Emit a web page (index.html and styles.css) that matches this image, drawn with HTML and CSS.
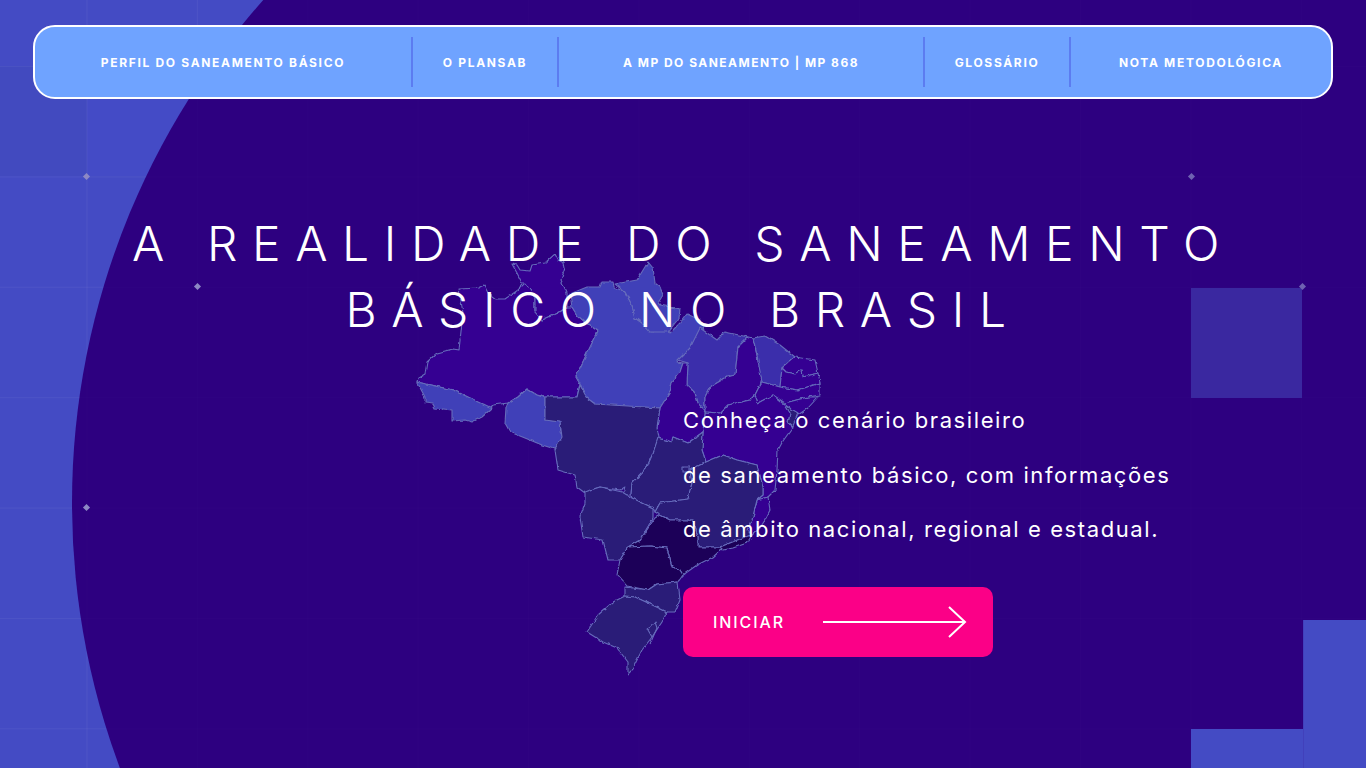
FILE: index.html
```html
<!DOCTYPE html>
<html lang="pt-BR">
<head>
<meta charset="utf-8">
<title>A realidade do saneamento básico no Brasil</title>
<link rel="stylesheet" href="styles.css">
</head>
<body>
<div class="backdrop" aria-hidden="true">
  <div class="cell cell-a"></div>
  <div class="cell cell-b"></div>
  <div class="gridlines"></div>
  <div class="disc"></div>
  <div class="gridlines gridlines-faint"></div>
  <div class="square square-main"></div>
  <div class="square square-tall"></div>
  <div class="square square-low"></div>
  <span class="dot d1"></span><span class="dot d2"></span><span class="dot d3"></span><span class="dot d4"></span><span class="dot d5"></span>
  <svg class="map" viewBox="0 0 1366 768" width="1366" height="768">
    <defs>
      <filter id="rough" x="0" y="0" width="100%" height="100%" filterUnits="userSpaceOnUse" primitiveUnits="userSpaceOnUse">
        <feTurbulence type="fractalNoise" baseFrequency="0.16" numOctaves="2" seed="4" result="n"/>
        <feDisplacementMap in="SourceGraphic" in2="n" scale="3.5" xChannelSelector="R" yChannelSelector="G"/>
      </filter>
    </defs>
    <g class="states" filter="url(#rough)">
      <path class="s-mid" d="M459 289 478 288 484 285 488 293 496 299 505 299 518 290 525 283 535 297 535 312 542 320 553 315 558 313 567 307 572 307 577 315 585 322 598 331 576 376 580 383 577 397 545 397 537 395 527 389 518 397 508 403 493 405 490 408 453 390 417 382 418 378 425 374 427 362 437 353 453 349 459 350 463 313Z"/>
      <path class="s-mid" d="M512 264 517 265 520 270 530 271 532 265 545 263 555 254 558 260 564 263 565 268 561 280 567 293 567 307 558 313 553 315 542 320 535 312 535 297 525 283 522 283 517 273Z"/>
      <path class="s-light" d="M417 382 453 390 492 408 482 417 472 422 465 420 452 421 452 410 435 408 433 404 425 403 425 397Z"/>
      <path class="s-light" d="M508 403 518 397 527 389 537 395 545 398 545 420 562 422 560 432 563 437 558 447 555 449 542 445 525 438 510 432 505 423 506 408Z"/>
      <path class="s-light" d="M576 376 598 331 585 322 577 315 572 307 570 294 587 287 600 287 602 282 613 282 614 287 625 292 632 305 635 318 642 323 653 332 667 327 670 333 680 323 687 314 700 320 703 327 697 342 687 353 677 362 683 363 680 372 672 382 670 392 660 408 597 405 585 397 580 383Z"/>
      <path class="s-light" d="M615 284 637 280 648 262 653 268 655 283 660 287 663 295 658 303 660 305 680 309 679 318 668 332 650 332 642 323 635 318 632 305 625 292Z"/>
      <path class="s-soft" d="M700 328 717 340 725 332 748 337 738 347 735 375 727 377 710 387 705 397 705 412 698 403 695 393 687 385 688 363 678 360 690 348Z"/>
      <path class="s-mid" d="M748 337 753 338 757 355 762 378 760 385 755 395 750 400 728 405 720 413 705 412 705 397 710 387 727 377 735 375 738 347Z"/>
      <path class="s-soft" d="M753 338 765 336 780 345 795 357 782 368 780 387 762 382 757 355Z"/>
      <path class="s-mid" d="M795 357 815 360 818 373 803 377 802 370 795 374 786 372 782 368Z"/>
      <path class="s-mid" d="M782 368 786 372 795 374 802 370 803 377 818 373 820 383 798 390 780 387Z"/>
      <path class="s-mid" d="M762 382 780 387 798 390 820 383 820 395 808 397 785 403 773 395 758 403 755 395 760 385Z"/>
      <path class="s-mid" d="M785 403 808 397 818 397 808 408 798 415 785 405Z"/>
      <path class="s-dark" d="M785 405 798 413 793 426 788 422 790 413Z"/>
      <path class="s-mid" d="M705 412 720 413 728 405 750 400 755 395 758 403 773 395 785 405 790 413 788 422 793 427 783 441 778 450 777 470 775 490 768 497 757 500 763 495 763 487 757 465 737 460 723 455 706 462 702 450 703 432Z"/>
      <path class="s-mid" d="M757 500 768 497 770 510 765 520 760 528 752 535 747 530 752 520Z"/>
      <path class="s-mid" d="M660 408 670 392 672 382 680 372 683 363 688 363 687 385 695 393 698 403 705 412 703 432 688 443 673 437 672 442 658 438 657 427Z"/>
      <path class="s-dark" d="M545 397 577 397 580 385 587 398 595 404 660 408 657 427 659 438 653 453 647 467 632 483 631 495 623 495 625 487 620 490 600 487 590 490 585 493 577 487 575 475 558 470 555 450 562 437 560 422 545 420Z"/>
      <path class="s-dark" d="M658 438 672 442 673 437 688 443 703 432 702 450 706 462 690 470 692 483 688 499 660 503 655 512 653 508 632 498 631 495 632 483 647 467 653 453Z"/>
      <path class="s-dark" d="M655 512 660 503 688 499 692 483 690 470 706 462 723 455 737 460 757 465 763 487 763 495 757 500 752 520 747 530 752 535 745 537 720 547 698 547 698 537 693 520 670 520 660 515Z"/>
      <path class="s-dark" d="M585 492 600 487 622 492 632 498 653 508 653 518 640 540 628 547 620 560 608 560 603 540 583 537 580 517 585 503Z"/>
      <path class="s-deep" d="M655 518 660 515 670 520 693 520 698 537 698 547 720 547 723 548 713 557 697 565 683 575 680 570 672 567 667 548 650 546 628 547 640 540Z"/>
      <path class="s-deep" d="M720 547 745 537 752 535 747 543 733 548 723 550Z"/>
      <path class="s-deep" d="M628 547 650 546 667 548 672 567 680 570 683 575 678 582 657 584 648 590 627 586 617 575 620 560Z"/>
      <path class="s-dark" d="M625 587 648 590 657 584 678 582 680 600 675 612 667 612 648 603 635 597 625 596Z"/>
      <path class="s-dark" d="M625 596 635 597 648 603 667 612 662 622 652 637 642 650 632 670 628 674 628 662 617 648 603 642 587 632 598 615 613 602Z"/>
      <path class="s-dark" d="M682 467h7v5h-7Z"/>
      <path class="s-mid s-line" d="M652 637 648 630 655 622 657 628 650 644"/>
    </g>
  </svg>
</div>

<nav class="topnav">
  <a class="navitem w-a" href="#">PERFIL DO SANEAMENTO BÁSICO</a>
  <a class="navitem w-b" href="#">O PLANSAB</a>
  <a class="navitem w-c" href="#">A MP DO SANEAMENTO | MP 868</a>
  <a class="navitem w-b" href="#">GLOSSÁRIO</a>
  <a class="navitem w-d" href="#">NOTA METODOLÓGICA</a>
</nav>

<main class="hero">
  <h1 class="title">A REALIDADE DO SANEAMENTO<br>BÁSICO NO BRASIL</h1>
  <section class="intro">
    <p class="lead">Conheça o cenário brasileiro<br>de saneamento básico, com informações<br>de âmbito nacional, regional e estadual.</p>
    <a class="start" href="#">
      <span class="start-label">INICIAR</span>
      <svg class="start-arrow" width="144" height="32" viewBox="0 0 144 32"><path d="M0 16H142M126 1l16 15-16 15"/></svg>
    </a>
  </section>
</main>
</body>
</html>
```
FILE: styles.css
```css
* { box-sizing: border-box; }
html, body { margin: 0; height: 768px; overflow: hidden; }
body {
  position: relative;
  background: #444bc4;
  color: #fff;
  font-family: Inter, "Open Sans", "Liberation Sans", sans-serif;
  padding: 25px 33px 0;
}
.backdrop { position: absolute; inset: 0; overflow: hidden; }
.disc {
  position: absolute;
  left: 72px; top: -254px;
  width: 1514px; height: 1514px;
  border-radius: 50%;
  background: #2d0080;
}
.cell { position: absolute; background: #424abf; }
.cell-a { left: 0; top: 66px; width: 87px; height: 110px; }
.cell-b { left: 87px; top: 66px; width: 110px; height: 110px; background: #444bc6; }
.gridlines {
  position: absolute; inset: 0;
  background-image:
    linear-gradient(90deg, rgba(255,255,255,.04) 1px, transparent 1px),
    linear-gradient(rgba(255,255,255,.04) 1px, transparent 1px);
  background-size: 110.4px 110.4px;
  background-position: 86.5px 66px;
}
.gridlines-faint {
  background-image:
    linear-gradient(90deg, rgba(255,255,255,.006) 1px, transparent 1px),
    linear-gradient(rgba(255,255,255,.006) 1px, transparent 1px);
}
.square { position: absolute; }
.square-main { left: 1191px; top: 288px; width: 111px; height: 110px; background: #3a28a0; }
.square-tall { left: 1303px; top: 620px; width: 63px; height: 148px; background: #444bc4; border-left: 1px solid #4140bb; }
.square-low { left: 1191px; top: 729px; width: 112px; height: 39px; background: #444bc4; }
.dot {
  position: absolute;
  width: 5px; height: 5px;
  background: #8d88c4;
  transform: rotate(45deg);
}
.d1 { left: 84px; top: 174px; }
.d2 { left: 195px; top: 284px; }
.d3 { left: 84px; top: 505px; }
.d4 { left: 1189px; top: 174px; background: #6f62b2; }
.d5 { left: 1300px; top: 284px; background: #6f62b2; }
.map { position: absolute; left: 0; top: 0; display: block; }
.states path { stroke: #666cbc; stroke-width: 1.1; stroke-linejoin: round; }
.states .s-line { fill: none; }
.s-light { fill: #4040b8; }
.s-soft { fill: #3b2dab; }
.s-mid { fill: #340092; }
.s-dark { fill: #2a1a78; }
.s-deep { fill: #1e0058; }

.topnav {
  position: relative;
  display: flex;
  align-items: center;
  height: 74px;
  width: 1300px;
  background: #6fa3ff;
  border: 2px solid #fff;
  border-radius: 22px;
}
.navitem {
  display: flex;
  align-items: center;
  justify-content: center;
  height: 50px;
  color: #fff;
  text-decoration: none;
  font-size: 12px;
  font-weight: 700;
  letter-spacing: 1.67px;
  white-space: nowrap;
  border-right: 2px solid #5c7cf0;
}
.navitem:last-child { border-right: 0; }
.w-a { width: 378px; }
.w-b { width: 146px; }
.w-c { width: 366px; letter-spacing: 1.47px; }
.w-d { flex: 1; }

.hero { position: relative; }
.title {
  margin: 112px -33px 0;
  text-align: center;
  font-size: 48px;
  line-height: 66px;
  font-weight: 300;
  letter-spacing: 14.6px;
}
.intro { margin: 50px 0 0 650px; }
.lead {
  margin: 0;
  font-size: 22px;
  line-height: 54.5px;
  letter-spacing: 1.6px;
}
.start {
  display: flex;
  align-items: center;
  margin-top: 30px;
  width: 310px;
  height: 70px;
  padding-left: 30px;
  background: #fb0087;
  border-radius: 10px;
  color: #fff;
  text-decoration: none;
}
.start-label { width: 110px; font-size: 16px; font-weight: 500; letter-spacing: 1.9px; }
.start-arrow { display: block; }
.start-arrow path { fill: none; stroke: #fff; stroke-width: 2; }
```
